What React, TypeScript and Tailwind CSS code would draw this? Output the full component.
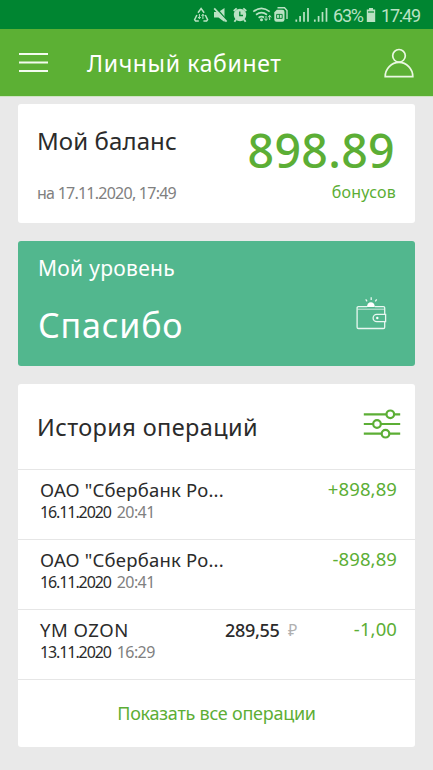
import { ReactNode } from "react";

type Operation = {
  id: number;
  title: string;
  titleClass: string;
  date: string;
  time: string;
  price?: string;
  bonus: string;
};

const operations: Operation[] = [
  {
    id: 1,
    title: 'ОАО "Сбербанк Ро...',
    titleClass: "tracking-[0.2px]",
    date: "16.11.2020",
    time: "20:41",
    bonus: "+898,89",
  },
  {
    id: 2,
    title: 'ОАО "Сбербанк Ро...',
    titleClass: "tracking-[0.2px]",
    date: "16.11.2020",
    time: "20:41",
    bonus: "-898,89",
  },
  {
    id: 3,
    title: "YM OZON",
    titleClass: "tracking-[0.5px]",
    date: "13.11.2020",
    time: "16:29",
    price: "289,55",
    bonus: "-1,00",
  },
];

const StatusIcons = () => (
  <svg width="136" height="29" viewBox="192 0 136 29" fill="none" stroke="#b9e2c3" strokeWidth="1.5">
    {/* recycle */}
    <path d="M198 12.8l3.1-4.3 3.1 4.3M196.9 15l-2.3 4.6 1 1.4h3.2M205.3 15l2.3 4.6-1 1.4h-3.2" />
    <path d="M199.4 14v4.5M202.9 19v-4.5M198.1 17l1.3 1.8 1.3-1.8M201.6 16l1.3-1.8 1.3 1.8" strokeWidth="1" />
    {/* muted speaker */}
    <path d="M214 12h4.5l6-4v14l-6-4.5h-4.5z" fill="#b9e2c3" stroke="none" />
    <path d="M215.6 7.2l12 14" stroke="#008531" strokeWidth="1.4" />
    <path d="M214.2 8.3l12.4 13.4" strokeWidth="1.8" />
    {/* alarm clock */}
    <circle cx="240" cy="15" r="6.2" fill="#b9e2c3" stroke="none" />
    <path d="M233.7 11l3-2.7M246.3 11l-3-2.7M236 19.5l-1.6 2.3M244 19.5l1.6 2.3" strokeWidth="1.8" />
    <path d="M239.8 11.5v4h3.2" stroke="#008531" strokeWidth="1.3" />
    {/* wifi */}
    <path d="M253.3 11.6q8.2-6.6 16.4 0M256 14.8q5.5-4.2 11 0M258.6 17.7q2.9-2 5.4-.2" strokeWidth="1.7" />
    <circle cx="261.5" cy="19.8" r="1.5" fill="#b9e2c3" stroke="none" />
    <path d="M266 16v4.3M264.4 18.6l1.6 1.9 1.6-1.9M269.7 20v-4.5M268.1 17.3l1.6-1.9 1.6 1.9" strokeWidth="1" />
    {/* memory card */}
    <path d="M277.5 7.8h7l2.5 2.8v8.4" strokeWidth="1.4" />
    <path d="M274.3 12.2l2.5-2.5h5.4q2.3 0 2.3 2.3v7.6q0 2.2-2.2 2.2h-5.8q-2.2 0-2.2-2.2z" fill="#b9e2c3" stroke="none" />
    <path d="M276.6 14.4h5.6v4h-5.6zM279.4 14.4v4" stroke="#008531" strokeWidth="0.9" />
    {/* signal bars */}
    <path d="M296.3 19.6v2.2M300.1 16v5.8M304 12v9.8M308 8v13.8" strokeWidth="1.7" />
    <path d="M314.8 19.6v2.2M318.6 16v5.8M322.5 12v9.8M326.5 8v13.8" strokeWidth="1.7" />
  </svg>
);

const WalletIcon = () => (
  <svg width="32" height="34" viewBox="0 0 32 34" fill="none" stroke="#e9f7f1" strokeWidth="1.3">
    <path d="M11 10a3.9 4.8 0 0 1 7.8 0z" fill="#fff" stroke="none" />
    <path d="M15.2 0.3v2.6M9.7 2.4l1.4 1.9M20.7 2.4l-1.4 1.9" />
    <path d="M11.2 9.6H2.4q-1.3 0-1.3 1.2v19.4q0 1.3 1.3 1.3h25q1.3 0 1.3-1.3V25M18.8 9.6h8.6q1.3 0 1.3 1.2V17" />
    <path d="M1.5 12.2h27" strokeWidth="0.8" />
    <path d="M29.6 17.3h-8.8a3.7 3.7 0 0 0 0 7.4h8.8z" />
    <circle cx="21.3" cy="21" r="1.2" fill="#fff" stroke="none" />
  </svg>
);

const FilterIcon = () => (
  <svg width="38" height="30" viewBox="0 0 38 30" fill="#fff" stroke="#5cae35" strokeWidth="2.2">
    <path d="M0.8 5.3H37.2M0.8 15H37.2M0.8 24.7H37.2" />
    <circle cx="27.3" cy="5.3" r="3.8" />
    <circle cx="14" cy="15" r="3.8" />
    <circle cx="22.5" cy="24.7" r="3.8" />
  </svg>
);

const Card = ({ children, className }: { children: ReactNode; className: string }) => (
  <section className={`rounded-[3px] whitespace-nowrap ${className}`}>{children}</section>
);

const App = () => {
  return (
    <div className="w-[433px] h-[770px] overflow-hidden bg-[#e9e9e9] font-['Noto_Sans','Open_Sans',sans-serif] text-[#2b2b2b]">
      {/* Status bar */}
      <div className="h-[29px] bg-[#008531] flex items-center justify-end pr-3 text-[#b9e2c3] font-['Roboto',sans-serif] text-[18px] leading-[29px] whitespace-nowrap">
        <StatusIcons />
        <span className="ml-[5px] w-[29px] pt-[2px] tracking-[-1.2px]">63%</span>
        <svg className="ml-1" width="10" height="29" viewBox="0 0 10 29" fill="#b9e2c3">
          <path d="M3 8h4v1.5h2.2V22H0.8V9.5H3z" />
          <path d="M2 11h6v2H2z" fill="#4fae6c" />
        </svg>
        <span className="ml-[5px] w-[40px] pt-[2px] tracking-[-1.2px]">17:49</span>
      </div>

      {/* Header */}
      <header className="h-[68px] bg-[#5cb034] border-b border-[#cfe3c4] flex items-center pl-[19px] pr-[19px] text-white">
        <svg width="29" height="22" viewBox="0 0 29 22" stroke="#f3fbee" strokeWidth="2">
          <path d="M0 2h29M0 10.6h29M0 19.1h29" />
        </svg>
        <h1 className="ml-[39px] flex-1 text-[23px] leading-8 whitespace-nowrap tracking-[0.65px]">Личный кабинет</h1>
        <svg width="30" height="30" viewBox="0 0 30 30" fill="none" stroke="#eaf8e2" strokeWidth="1.7">
          <circle cx="15" cy="7.8" r="6.3" />
          <path d="M1.2 28.6a13.8 14.2 0 0 1 27.6 0z" />
        </svg>
      </header>

      <main className="px-[18px] pt-[7px] flex flex-col gap-[18px]">
        {/* Balance */}
        <Card className="bg-white h-[118.5px] flex justify-between pl-[19px] pr-[19px]">
          <div className="pt-[21px]">
            <h2 className="text-[24px] leading-8 tracking-[0.1px]">Мой баланс</h2>
            <p className="mt-[26px] text-[16px] leading-5 text-[#808080] tracking-[-0.75px]">на 17.11.2020, 17:49</p>
          </div>
          <div className="pt-[22px] flex flex-col items-end text-[#5cae35]">
            <strong className="pr-px font-medium text-[46.5px] leading-[48px] tracking-[0.3px]">898.89</strong>
            <span className="mt-[8px] text-[16px] leading-5 tracking-[0.2px]">бонусов</span>
          </div>
        </Card>

        {/* Level */}
        <Card className="bg-[#52b78e] text-white h-[125px] flex justify-between pl-5 pr-[27px]">
          <div className="pt-[13px]">
            <h2 className="text-[21px] leading-7 tracking-[0.3px]">Мой уровень</h2>
            <p className="mt-[21px] text-[34px] leading-[44px] tracking-[0.8px]">Спасибо</p>
          </div>
          <div className="pt-[56px]">
            <WalletIcon />
          </div>
        </Card>

        {/* History */}
        <Card className="bg-white">
          <div className="h-[86px] border-b border-[#e6e6e6] flex items-center justify-between pl-[19px] pr-[14px]">
            <h2 className="pt-[2px] text-[23.5px] leading-8 tracking-[0.4px]">История операций</h2>
            <div className="pb-[4px]">
              <FilterIcon />
            </div>
          </div>
          {operations.map((op) => (
            <div key={op.id} className="h-[70px] border-b border-[#e6e6e6] flex pl-[22px] pr-[18px] pt-[8px]">
              <div className="w-[185px]">
                <h3 className={`text-[18.5px] leading-6 ${op.titleClass}`}>{op.title}</h3>
                <p className="text-[16px] leading-5 tracking-[-1.1px]">
                  {op.date}
                  <span className="ml-[6px] text-[#808080] tracking-[-0.6px]">{op.time}</span>
                </p>
              </div>
              {op.price && (
                <div className="flex text-[18px] leading-6">
                  <span className="font-medium tracking-[-0.3px] w-[63px]">{op.price}</span>
                  <span className="text-[#b0b0b0] text-[16px]">₽</span>
                </div>
              )}
              <span className="-mt-px ml-auto text-[18.5px] leading-6 text-[#5cae35] tracking-[0.1px]">{op.bonus}</span>
            </div>
          ))}
          <button className="block w-full h-[67px] pt-px text-center text-[18px] text-[#5cae35] tracking-[-0.25px]">
            Показать все операции
          </button>
        </Card>
      </main>
    </div>
  );
};

export default App;
